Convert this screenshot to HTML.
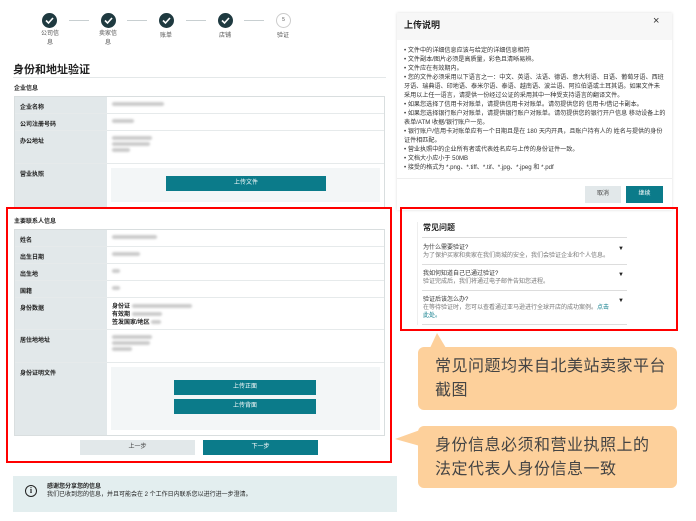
<!DOCTYPE html>
<html><head><meta charset="utf-8"><style>
*{margin:0;padding:0;box-sizing:border-box}
body{width:696px;height:521px;background:#fff;position:relative;overflow:hidden;font-family:"Liberation Sans","Noto Sans CJK SC",sans-serif;color:#222}
.a{position:absolute}
.t{font-size:6px;white-space:nowrap}
.circ{position:absolute;width:15px;height:15px;border-radius:50%;background:#1f3a40}
.circ svg{position:absolute;left:3px;top:3px}
.ln{position:absolute;height:1px;background:#c8cfd1;top:20px;width:20px}
.tbl{position:absolute;left:14px;width:371px;border:1px solid #d9dedf;background:#fff}
.row{display:flex;border-bottom:1px solid #e6eaeb}
.row .l{width:92px;background:#e2e8ea;padding:5px 0 0 5px;font-size:6px;font-weight:bold}
.row .v{flex:1;padding:5px 0 0 5px;font-size:6px}
.blur{display:inline-block;height:4px;background:#ccc;border-radius:2px;filter:blur(1px)}
.btn{position:absolute;background:#0b7b8a;color:#fff;font-size:6px;text-align:center}
.red{position:absolute;border:2.5px solid #f00}
.call{position:absolute;background:#fdd09b;border-radius:6px;color:#444;font-size:16px;line-height:24px;padding:8px 0 0 17px;letter-spacing:.5px}
</style></head><body>
<div class="circ" style="left:42px;top:13px"><svg width="9" height="9" viewBox="0 0 9 9"><path d="M1 4.5 L3.5 7 L8 2" stroke="#fff" stroke-width="1.6" fill="none"/></svg></div>
<div class="circ" style="left:101px;top:13px"><svg width="9" height="9" viewBox="0 0 9 9"><path d="M1 4.5 L3.5 7 L8 2" stroke="#fff" stroke-width="1.6" fill="none"/></svg></div>
<div class="circ" style="left:159px;top:13px"><svg width="9" height="9" viewBox="0 0 9 9"><path d="M1 4.5 L3.5 7 L8 2" stroke="#fff" stroke-width="1.6" fill="none"/></svg></div>
<div class="circ" style="left:218px;top:13px"><svg width="9" height="9" viewBox="0 0 9 9"><path d="M1 4.5 L3.5 7 L8 2" stroke="#fff" stroke-width="1.6" fill="none"/></svg></div>
<div class="a" style="left:276px;top:13px;width:15px;height:15px;border-radius:50%;border:1px solid #ccc;font-size:5px;text-align:center;line-height:13px;color:#555">5</div>
<div class="ln" style="left:69px"></div><div class="ln" style="left:127px"></div><div class="ln" style="left:186px"></div><div class="ln" style="left:244px"></div>
<div class="a t" style="left:41px;top:30px;color:#555;line-height:9px;text-align:center">公司信<br>息</div>
<div class="a t" style="left:99px;top:30px;color:#555;line-height:9px;text-align:center">卖家信<br>息</div>
<div class="a t" style="left:160px;top:30px;color:#555">账单</div>
<div class="a t" style="left:219px;top:30px;color:#555">店铺</div>
<div class="a t" style="left:277px;top:30px;color:#555">验证</div>
<div class="a" style="left:13px;top:61px;font-size:11px;font-weight:bold;color:#222">身份和地址验证</div>
<div class="a" style="left:13px;top:77px;width:373px;height:1px;background:#e4e8e9"></div>
<div class="a t" style="left:14px;top:83px;font-weight:bold">企业信息</div>
<div class="tbl" style="top:96px">
<div class="row" style="height:17px"><div class="l">企业名称</div><div class="v"><span class="blur" style="width:52px"></span></div></div>
<div class="row" style="height:17px"><div class="l">公司注册号码</div><div class="v"><span class="blur" style="width:22px"></span></div></div>
<div class="row" style="height:33px"><div class="l">办公地址</div><div class="v"><span class="blur" style="width:40px"></span><br><span class="blur" style="width:38px"></span><br><span class="blur" style="width:18px"></span></div></div>
<div class="row" style="height:43px;border:0"><div class="l">营业执照</div><div class="v" style="padding:4px"><div style="background:#f3f6f7;height:34px"></div></div></div>
</div>
<div class="btn" style="left:166px;top:176px;width:160px;height:15px;line-height:15px">上传文件</div>
<div class="a t" style="left:14px;top:216px;font-weight:bold">主要联系人信息</div>
<div class="tbl" style="top:229px">
<div class="row" style="height:17px"><div class="l">姓名</div><div class="v"><span class="blur" style="width:45px"></span></div></div>
<div class="row" style="height:17px"><div class="l">出生日期</div><div class="v"><span class="blur" style="width:28px"></span></div></div>
<div class="row" style="height:17px"><div class="l">出生地</div><div class="v"><span class="blur" style="width:8px"></span></div></div>
<div class="row" style="height:17px"><div class="l">国籍</div><div class="v"><span class="blur" style="width:8px"></span></div></div>
<div class="row" style="height:32px"><div class="l">身份数据</div><div class="v" style="font-weight:bold;line-height:8px">身份证 <span class="blur" style="width:60px"></span><br>有效期 <span class="blur" style="width:30px"></span><br>签发国家/地区 <span class="blur" style="width:10px"></span></div></div>
<div class="row" style="height:33px"><div class="l">居住地地址</div><div class="v"><span class="blur" style="width:40px"></span><br><span class="blur" style="width:38px"></span><br><span class="blur" style="width:20px"></span></div></div>
<div class="row" style="height:72px;border:0"><div class="l">身份证明文件</div><div class="v" style="padding:4px"><div style="background:#f3f6f7;height:63px"></div></div></div>
</div>
<div class="btn" style="left:174px;top:380px;width:142px;height:15px;line-height:15px">上传正面</div>
<div class="btn" style="left:174px;top:399px;width:142px;height:15px;line-height:15px">上传背面</div>
<div class="a" style="left:80px;top:440px;width:115px;height:15px;background:#e2e8ea;font-size:6px;text-align:center;line-height:15px;color:#444">上一步</div>
<div class="btn" style="left:203px;top:440px;width:115px;height:15px;line-height:15px">下一步</div>
<div class="red" style="left:6px;top:207px;width:386px;height:256px"></div>
<div class="a" style="left:13px;top:476px;width:384px;height:36px;background:#e3eeef"></div>
<div class="a" style="left:25px;top:485px;width:12px;height:12px;border:1.3px solid #222;border-radius:50%;font-size:8px;text-align:center;line-height:10px;font-weight:bold;font-family:'Liberation Serif',serif">i</div>
<div class="a t" style="left:47px;top:483px;font-weight:bold;line-height:8px">感谢您分享您的信息<br><span style="font-weight:normal">我们已收到您的信息，并且可能会在 2 个工作日内联系您以进行进一步澄清。</span></div>
<div class="a" style="left:397px;top:13px;width:275px;height:197px;background:#fff;box-shadow:0 0 3px #ddd"></div>
<div class="a" style="left:397px;top:13px;width:275px;height:27px;background:#f7f7f7"></div>
<div class="a" style="left:404px;top:18px;font-size:9px;font-weight:bold">上传说明</div>
<div class="a" style="left:653px;top:15px;font-size:11px;color:#333">×</div>
<div class="a" style="left:404px;top:46px;width:262px;font-size:6.1px;line-height:9px;color:#333">
• 文件中的详细信息应该与给定的详细信息相符<br>• 文件副本/图片必须是高质量，彩色且清晰易辨。<br>• 文件应在有效期内。<br>• 您的文件必须采用以下语言之一：中文、英语、法语、德语、意大利语、日语、葡萄牙语、西班牙语、瑞典语、印地语、泰米尔语、泰语、越南语、波兰语、阿拉伯语或土耳其语。如果文件未采用以上任一语言，请提供一份经过公证的采用其中一种受支持语言的翻译文件。<br>• 如果您选择了信用卡对账单，请提供信用卡对账单。请勿提供您的 信用卡/借记卡副本。<br>• 如果您选择银行账户对账单，请提供银行账户对账单。请勿提供您的银行开户信息 移动设备上的表单/ATM 收据/银行账户一览。<br>• 银行账户/信用卡对账单应有一个日期且是在 180 天内开具，且账户持有人的 姓名与提供的身份证件相匹配。<br>• 营业执照中的企业所有者或代表姓名应与上传的身份证件一致。<br>• 文档大小应小于 50MB<br>• 接受的格式为 *.png、*.tiff、*.tif、*.jpg、*.jpeg 和 *.pdf</div>
<div class="a" style="left:397px;top:178px;width:275px;height:1px;background:#eee"></div>
<div class="a" style="left:585px;top:186px;width:36px;height:17px;background:#e2e8ea;font-size:6px;text-align:center;line-height:17px;color:#444">取消</div>
<div class="btn" style="left:626px;top:186px;width:37px;height:17px;line-height:17px">继续</div>
<div class="a" style="left:417px;top:222px;width:1px;height:103px;background:#eee"></div>
<div class="a" style="left:423px;top:222px;font-size:8px;font-weight:bold">常见问题</div>
<div class="a" style="left:422px;top:237px;width:205px;height:1px;background:#ddd"></div>
<div class="a t" style="left:423px;top:244px;line-height:8px;color:#333">为什么需要验证?<br><span style="color:#777">为了保护买家和卖家在我们商城的安全，我们会验证企业和个人信息。</span></div>
<div class="a" style="left:422px;top:264px;width:205px;height:1px;background:#ddd"></div>
<div class="a t" style="left:423px;top:270px;line-height:8px;color:#333">我如何知道自己已通过验证?<br><span style="color:#777">验证完成后，我们将通过电子邮件告知您进程。</span></div>
<div class="a" style="left:422px;top:290px;width:205px;height:1px;background:#ddd"></div>
<div class="a t" style="left:423px;top:296px;line-height:8px;color:#333">验证后该怎么办?<br><span style="color:#777">在等待验证时，您可以查看通过亚马逊进行全球开店的成功案例。<span style="color:#0b7b8a">点击</span><br><span style="color:#0b7b8a">此处。</span></span></div>
<div class="a" style="left:422px;top:324px;width:205px;height:1px;background:#ddd"></div>
<div class="a t" style="left:618px;top:246px">▼</div><div class="a t" style="left:618px;top:272px">▼</div><div class="a t" style="left:618px;top:298px">▼</div>
<div class="red" style="left:400px;top:207px;width:278px;height:124px"></div>
<svg class="a" style="left:0;top:0" width="696" height="521"><path d="M430 348 L437 333 L446 348 Z" fill="#fdd09b"/><path d="M420 430 L395 439 L420 446 Z" fill="#fdd09b"/></svg>
<div class="call" style="left:418px;top:347px;width:259px;height:63px">常见问题均来自北美站卖家平台<br>截图</div>
<div class="call" style="left:418px;top:426px;width:259px;height:62px">身份信息必须和营业执照上的<br>法定代表人身份信息一致</div>
</body></html>
